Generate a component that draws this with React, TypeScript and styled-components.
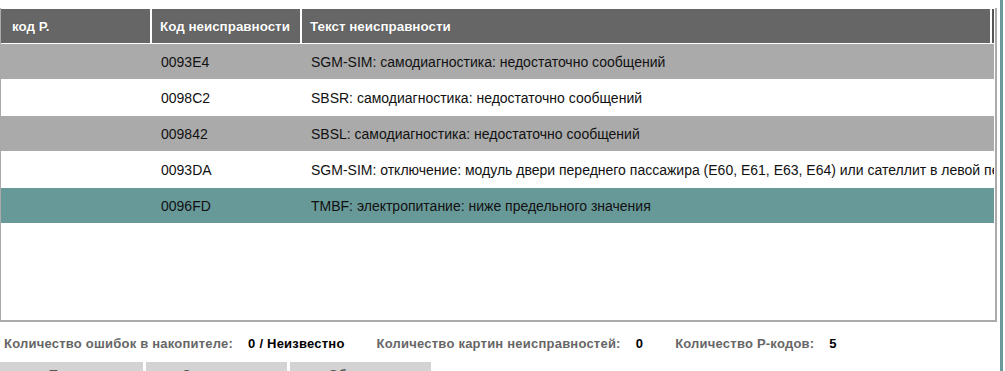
import React from "react";
import styled, { createGlobalStyle } from "styled-components";

const Global = createGlobalStyle`
  html, body { margin: 0; padding: 0; background: #fff; overflow: hidden; }
  body { font-family: "Liberation Sans", Arial, sans-serif; }
`;

const Page = styled.div`
  display: flex;
  width: 1005px;
  height: 371px;
  overflow: hidden;
`;

const Main = styled.div`
  width: 997px;
  flex-shrink: 0;
  display: flex;
  flex-direction: column;
  padding-top: 8px;
  & > * { flex-shrink: 0; }
`;

const Splitter = styled.div`
  width: 3px;
  margin-left: 3px;
  background: #6a9a99;
  height: 100%;
  flex-shrink: 0;
`;

const TableBox = styled.div`
  height: 314px;
  box-sizing: border-box;
  border-left: 1px solid #aaa;
  border-right: 2px solid #aaa;
  border-bottom: 2px solid #aaa;
  padding-top: 1px;
  padding-right: 1px;
  display: flex;
  flex-direction: column;
`;

const HeaderRow = styled.div`
  display: grid;
  grid-template-columns: 149px 148px 688px 2px;
  column-gap: 2px;
  height: 34px;
  border-bottom: 1px solid #fff;
`;

const HeaderCell = styled.div<{ $dark?: boolean; $pad?: number }>`
  background: ${(p) => (p.$dark ? "#555" : "#666")};
  color: #fff;
  font-weight: bold;
  font-size: 13.4px;
  display: flex;
  align-items: center;
  padding-left: ${(p) => (p.$dark ? 0 : p.$pad ?? 8)}px;
  text-shadow: 0 0 1px rgba(0, 0, 0, 0.4);
  white-space: nowrap;
  overflow: hidden;
`;

const Row = styled.div<{ $bg: string; $h: number }>`
  display: grid;
  grid-template-columns: 151px 150px 1fr;
  height: ${(p) => p.$h}px;
  background: ${(p) => p.$bg};
  align-items: center;
  font-size: 14px;
  color: #111;
`;

const Cell = styled.div`
  padding-left: 9px;
  white-space: nowrap;
  overflow: hidden;
`;

const Footer = styled.div`
  display: flex;
  align-items: center;
  height: 16px;
  margin-top: 13px;
  padding-left: 4px;
  font-size: 13px;
  letter-spacing: 0.22px;
  font-weight: bold;
  white-space: nowrap;
`;

const Label = styled.span`
  color: #666;
  margin-right: 15px;
`;

const Value = styled.span`
  color: #000;
  margin-right: 32px;
`;

const Buttons = styled.div`
  display: flex;
  gap: 3px;
  margin-top: 11px;
`;

const Button = styled.div<{ $w: number }>`
  width: ${(p) => p.$w}px;
  height: 30px;
  background: #d3d3d3;
  color: #555;
  font-size: 13px;
  font-weight: bold;
  display: flex;
  justify-content: center;
  padding-top: 5px;
  box-sizing: border-box;
`;

const rows = [
  { code: "0093E4", text: "SGM-SIM: самодиагностика: недостаточно сообщений", bg: "#aaaaaa", h: 35 },
  { code: "0098C2", text: "SBSR: самодиагностика: недостаточно сообщений", bg: "#ffffff", h: 37 },
  { code: "009842", text: "SBSL: самодиагностика: недостаточно сообщений", bg: "#aaaaaa", h: 35 },
  {
    code: "0093DA",
    text: "SGM-SIM: отключение: модуль двери переднего пассажира (E60, E61, E63, E64) или сателлит в левой передней стойке",
    bg: "#ffffff",
    h: 37,
  },
  { code: "0096FD", text: "TMBF: электропитание: ниже предельного значения", bg: "#689999", h: 35 },
];

export default function App() {
  return (
    <Page>
      <Global />
      <Main>
        <TableBox>
          <HeaderRow>
            <HeaderCell $pad={11}>код Р.</HeaderCell>
            <HeaderCell>Код неисправности</HeaderCell>
            <HeaderCell>Текст неисправности</HeaderCell>
            <HeaderCell $dark />
          </HeaderRow>
          {rows.map((r) => (
            <Row key={r.code} $bg={r.bg} $h={r.h}>
              <Cell />
              <Cell>{r.code}</Cell>
              <Cell>{r.text}</Cell>
            </Row>
          ))}
        </TableBox>
        <Footer>
          <Label>Количество ошибок в накопителе:</Label>
          <Value>0 / Неизвестно</Value>
          <Label>Количество картин неисправностей:</Label>
          <Value>0</Value>
          <Label>Количество Р-кодов:</Label>
          <Value>5</Value>
        </Footer>
        <Buttons>
          <Button $w={143}>Печать</Button>
          <Button $w={141}>Сохранить</Button>
          <Button $w={141}>Обновить</Button>
        </Buttons>
      </Main>
      <Splitter />
    </Page>
  );
}
